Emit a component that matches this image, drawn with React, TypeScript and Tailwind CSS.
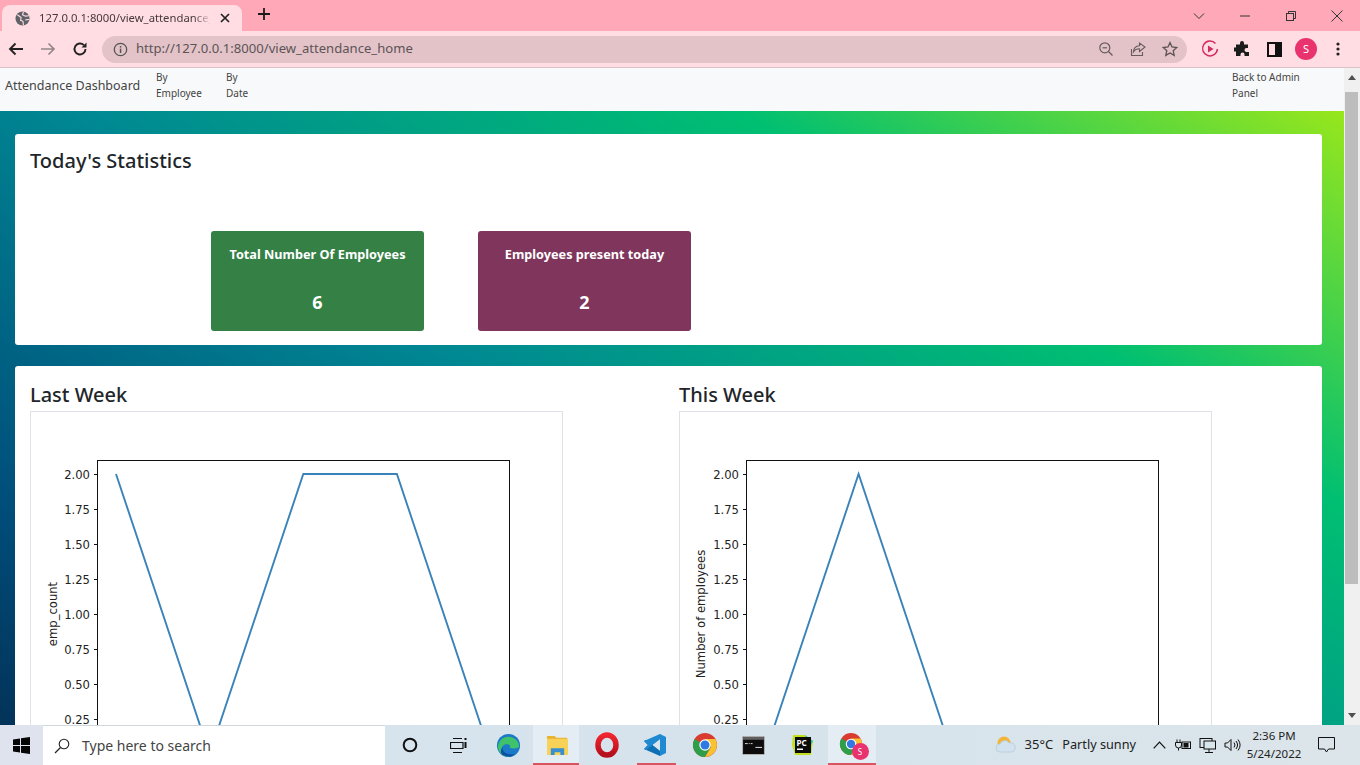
import React from "react";

const ui = { fontFamily: '"Noto Sans", "Open Sans", sans-serif' };

function Chart({ ylabel, points, labelX }: { ylabel: string; points: string; labelX: number }) {
  const ticks = [
    ["2.00", 62], ["1.75", 97], ["1.50", 132], ["1.25", 167], ["1.00", 202], ["0.75", 237], ["0.50", 272], ["0.25", 307], ["0.00", 342],
  ] as [string, number][];
  return (
    <svg width="531" height="398" viewBox="0 0 531 398" className="block" style={{ fontFamily: '"DejaVu Sans", sans-serif' }}>
      <rect x="66.5" y="48.5" width="412" height="308" fill="#fff" stroke="#111" strokeWidth="1" />
      {ticks.map(([t, y]) => (
        <g key={t}>
          <line x1="63" x2="66" y1={y + 0.5} y2={y + 0.5} stroke="#111" />
          <text x="59" y={y + 4.5} fontSize="11.6" fill="#222" textAnchor="end">{t}</text>
        </g>
      ))}
      <text transform={`translate(${labelX} 202) rotate(-90)`} fontSize="11.6" fill="#222" textAnchor="middle">{ylabel}</text>
      <polyline points={points} fill="none" stroke="#3a83b9" strokeWidth="1.9" />
    </svg>
  );
}

function WeekCol({ title, ylabel, points, labelX, width }: { title: string; ylabel: string; points: string; labelX: number; width: string }) {
  return (
    <div className={width}>
      <h3 className="text-[20px] leading-[28px] font-medium text-[#212529] pt-[15px] pb-[2px]" style={ui}>{title}</h3>
      <div className="border border-[#dee2e6] w-[533px] bg-white">
        <Chart ylabel={ylabel} points={points} labelX={labelX} />
      </div>
    </div>
  );
}

function Stat({ title, value, color }: { title: string; value: string; color: string }) {
  return (
    <div className={`w-[213px] h-[100px] rounded-[3px] text-white text-center flex flex-col ${color}`}>
      <div className="text-[12.7px] font-bold leading-[18px] pt-[14px]" style={ui}>{title}</div>
      <div className="text-[18px] font-bold leading-[24px] mt-[27px]" style={ui}>{value}</div>
    </div>
  );
}

function Toolbar() {
  return (
    <div className="h-[37px] bg-[#ffdde3] border-b border-[#dcc0c6] flex items-center pl-[8px] pr-[14px]">
      <svg width="16" height="16" viewBox="0 0 16 16" className="mr-[16px]"><path d="M15 8H2M7.5 2.5 2 8l5.5 5.5" fill="none" stroke="#222" strokeWidth="1.9" /></svg>
      <svg width="16" height="16" viewBox="0 0 16 16" className="mr-[16px]"><path d="M1 8h13M8.5 2.5 14 8l-5.5 5.5" fill="none" stroke="#94868a" strokeWidth="1.7" /></svg>
      <svg width="16" height="16" viewBox="0 0 16 16" className="mr-[14px]"><path d="M13.5 8a5.5 5.5 0 1 1-1.6-3.9" fill="none" stroke="#222" strokeWidth="1.9" /><path d="M14.5 1.5v5h-5z" fill="#222" /></svg>
      <div className="w-[1085px] h-[27px] rounded-full bg-[#e3c3c8] flex items-center pl-[11px] pr-[9px]">
        <svg width="15" height="15" viewBox="0 0 15 15" className="mr-[8px]"><circle cx="7.5" cy="7.5" r="6.2" fill="none" stroke="#555" strokeWidth="1.3" /><rect x="6.8" y="6.6" width="1.5" height="4.4" fill="#555" /><rect x="6.8" y="4" width="1.5" height="1.6" fill="#555" /></svg>
        <span className="text-[13.1px] text-[#5c5356]" style={ui}>http://127.0.0.1:8000/view_attendance_home</span>
        <div className="ml-auto flex items-center gap-[16px]">
          <svg width="16" height="16" viewBox="0 0 16 16"><circle cx="6.8" cy="6.8" r="5" fill="none" stroke="#665c5f" strokeWidth="1.2" /><path d="M10.5 10.5 14.5 14.5" stroke="#665c5f" strokeWidth="1.3" /><path d="M4.5 6.8h4.6" stroke="#665c5f" strokeWidth="1.2" /></svg>
          <svg width="16" height="16" viewBox="0 0 16 16"><path d="M1.5 8v6.5h11V11" fill="none" stroke="#665c5f" strokeWidth="1.1" /><path d="M9.5 2v2.7C5.5 5 3.5 7.5 3.4 11c1.4-2.3 3.4-3.2 6.1-3.2V10.5L15 6z" fill="none" stroke="#665c5f" strokeWidth="1.1" /></svg>
          <svg width="16" height="16" viewBox="0 0 16 16"><path d="M8 1.6 10 6l4.7.5-3.5 3.2 1 4.7L8 12l-4.2 2.4 1-4.7L1.3 6.5 6 6z" fill="none" stroke="#5b5255" strokeWidth="1.3" /></svg>
        </div>
      </div>
      <svg width="18" height="18" viewBox="0 0 18 18" className="ml-[14px]"><path d="M14.5 3.5A7.4 7.4 0 1 0 16.4 9" fill="none" stroke="#d22c61" strokeWidth="1.5" /><path d="M7 5.5 12.5 9 7 12.500z" fill="#d22c61" /></svg>
      <svg width="16" height="16" viewBox="0 0 16 16" className="ml-[15px]"><path d="M6 2a2 2 0 0 1 4 0V3.500h4V7h-1.500a2 2 0 0 0 0 4H15v4H10.500v-1.500a2 2 0 0 0-4 0V15H2v-4.500H.8a2 2 0 0 1 0-4H2V3.500h4z" fill="#1c1c1c" /></svg>
      <svg width="15" height="15" viewBox="0 0 15 15" className="ml-[17px]"><rect x="1" y="1" width="13" height="13" fill="none" stroke="#111" strokeWidth="2" /><rect x="8" y="1" width="6" height="13" fill="#111" /></svg>
      <div className="ml-[13px] w-[22px] h-[22px] rounded-full bg-[#e8336f] text-white text-[11px] flex items-center justify-center" style={ui}>S</div>
      <svg width="6" height="16" viewBox="0 0 6 16" className="ml-[18px]"><circle cx="3" cy="3" r="1.600" fill="#222" /><circle cx="3" cy="8" r="1.600" fill="#222" /><circle cx="3" cy="13" r="1.600" fill="#222" /></svg>
    </div>
  );
}

function TitleBar() {
  return (
    <div className="h-[31px] bg-[#ffa9b8] flex items-end relative">
      <div className="ml-[2px] w-[240px] h-[26px] bg-[#ffdde3] rounded-t-[8px] flex items-center pl-[13px] pr-[12px]">
        <svg width="15" height="15" viewBox="0 0 16 16" className="mr-[9px] shrink-0"><circle cx="8" cy="8" r="7.500" fill="#5f6368" /><path d="M2.500 4 6.500 7 6 10l2.500 1 .5 4M9 1 8 4l3 1.500 4-.5M11 9.500l4-.5" stroke="#ffdde3" strokeWidth="1.200" fill="none" /></svg>
        <span className="text-[11.300px] text-[#45393c] whitespace-nowrap overflow-hidden w-[172px]" style={{ ...ui, maskImage: "linear-gradient(to right, black 90%, transparent)" }}>127.0.0.1:8000/view_attendance_home</span>
        <svg width="10" height="10" viewBox="0 0 10 10" className="ml-auto"><path d="M1 1 9 9M9 1 1 9" stroke="#222" strokeWidth="1.700" /></svg>
      </div>
      <svg width="14" height="14" viewBox="0 0 14 14" className="ml-[15px] mb-[10px]"><path d="M7 1v12M1 7h12" stroke="#1b1b1b" strokeWidth="1.800" /></svg>
      <div className="ml-auto flex h-full items-center text-[#333]">
        <div className="w-[46px] flex justify-center"><svg width="12" height="8" viewBox="0 0 12 8"><path d="M1 1.500 6 6.500 11 1.500" fill="none" stroke="#333" /></svg></div>
        <div className="w-[46px] flex justify-center"><svg width="10" height="2" viewBox="0 0 10 2"><path d="M0 1h10" stroke="#333" /></svg></div>
        <div className="w-[46px] flex justify-center"><svg width="10" height="10" viewBox="0 0 10 10"><rect x=".5" y="2.500" width="7" height="7" fill="none" stroke="#333" /><path d="M2.500 2.500V.5h7v7H7.500" fill="none" stroke="#333" /></svg></div>
        <div className="w-[46px] flex justify-center"><svg width="12" height="12" viewBox="0 0 12 12"><path d="M.5.5l11 11M11.500.5l-11 11" stroke="#333" /></svg></div>
      </div>
    </div>
  );
}

function Chrome({ size = 26 }: { size?: number }) {
  return (
    <svg width={size} height={size} viewBox="0 0 26 26">
      <circle cx="13" cy="13" r="12" fill="#d93b30" />
      <path d="M13 13 2.600 7A12 12 0 0 0 13 25l6-10z" fill="#2f9e4b" />
      <path d="M13 7h10.300A12 12 0 0 1 13 25l6-10z" fill="#f9c22e" />
      <circle cx="13" cy="13" r="5.700" fill="#fff" />
      <circle cx="13" cy="13" r="4.500" fill="#3079e3" />
    </svg>
  );
}

function TaskIcon({ children, bar, lit }: { children: React.ReactNode; bar?: string; lit?: string }) {
  return (
    <div className="w-[49px] relative flex items-center justify-center">
      {lit && <div className={`absolute inset-y-0 ${lit} bg-[#e4edf3]`} />}
      {bar && <div className={`absolute bottom-0 h-[2px] bg-[#d9545f] ${bar}`} />}
      <div className="relative flex">{children}</div>
    </div>
  );
}

function Taskbar() {
  return (
    <div className="h-[40px] shrink-0 flex items-stretch bg-gradient-to-r from-[#d8e5ef] via-[#d6e3ec] to-[#dbe5ea] relative">
      <div className="w-[43px] bg-[#dfe3ee] flex items-center justify-center">
        <svg width="17" height="17" viewBox="0 0 17 17"><path d="M0 2.500 7 1.500V8H0zM8 1.300 17 0V8H8zM0 9h7v6.500L0 14.500zM8 9h9v8L8 15.700z" fill="#050505" /></svg>
      </div>
      <div className="w-[342px] bg-white border-t border-[#cfd8df] flex items-center pl-[11px]">
        <svg width="16" height="16" viewBox="0 0 16 16" className="mr-[12px]"><circle cx="10" cy="6" r="4.800" fill="none" stroke="#222" strokeWidth="1.100" /><path d="M6.500 9.500 1 15" stroke="#222" strokeWidth="1.300" /></svg>
        <span className="text-[14px] text-[#444]" style={ui}>Type here to search</span>
      </div>
      <div className="w-[49px] flex items-center justify-center">
        <svg width="16" height="16" viewBox="0 0 16 16"><circle cx="8" cy="8" r="6.300" fill="none" stroke="#111" strokeWidth="2" /></svg>
      </div>
      <div className="w-[49px] mr-[1px] flex items-center justify-center">
        <svg width="17" height="15" viewBox="0 0 17 15"><path d="M3 .5h9M.5 4.500h12.500v6H.5zM3 14.500h9" fill="none" stroke="#111" strokeWidth="1.200" /><rect x="14.500" y="0" width="2" height="2" fill="#111" /><rect x="14.500" y="4" width="2" height="6" fill="#111" /></svg>
      </div>
      <TaskIcon>
        <svg width="25" height="25" viewBox="0 0 26 26"><circle cx="13" cy="13" r="12" fill="#1b79c8" /><path d="M2 15C2 7 9 3 14 4c6 1 10 5 10 10-1 2-6 3-10 1 0 0 2-2-1-3-4-1-8 2-7 6 1 4 6 6 12 4-4 4-14 3-16-7z" fill="#3fc26b" /><path d="M7 15c-1 5 5 8 12 7-2 3-8 3-12 1-3-2-2-7 0-8z" fill="#0b4fa0" /></svg>
      </TaskIcon>
      <TaskIcon bar="left-[0px] w-[46px]" lit="left-[0px] w-[46px]">
        <svg width="23" height="21" viewBox="0 0 24 22"><path d="M1 1h8l2 2h11v4H1z" fill="#e8b32e" /><rect x="1" y="4" width="22" height="17" fill="#f7d256" /><path d="M5 21v-7h14v7h-4v-3H9v3z" fill="#3a8fd0" /></svg>
      </TaskIcon>
      <TaskIcon>
        <svg width="24" height="26" viewBox="0 0 24 26"><defs><linearGradient id="op" x1="0" x2="0" y1="0" y2="1"><stop offset="0" stopColor="#f0252f" /><stop offset="1" stopColor="#b30f1c" /></linearGradient></defs><ellipse cx="12" cy="13" rx="9" ry="10" fill="none" stroke="url(#op)" strokeWidth="5.500" /></svg>
      </TaskIcon>
      <TaskIcon bar="left-[6px] w-[39px]">
        <svg width="24" height="24" viewBox="0 0 24 24" className="mr-[2px]"><path d="M17 1 23 4v16l-6 3L7 13z" fill="#1f8ad2" /><path d="M17 6v12L9 12z" fill="#d8e5ef" /><path d="M1 8l2-1 14 11v5L1 16l4-4z" fill="#0f6fb5" /><path d="M1 16l2 1L17 6V1L1 8l4 4z" fill="#1f8ad2" /></svg>
      </TaskIcon>
      <TaskIcon><Chrome /></TaskIcon>
      <TaskIcon>
        <svg width="23" height="19" viewBox="0 0 24 20"><rect x=".5" y=".5" width="23" height="19" rx="1" fill="#0c0c0c" stroke="#b5b5b5" /><rect x="1" y="1" width="22" height="3" fill="#5f5f5f" /><path d="M3 8h3M7 8h1M9 8h2" stroke="#ddd" /><path d="M14 12h7" stroke="#eee" /></svg>
      </TaskIcon>
      <TaskIcon>
        <svg width="24" height="24" viewBox="0 0 24 24"><path d="M2 2h12l8 6-2 14H4L1 12z" fill="#c5e01c" /><path d="M14 2l8 6-4 8z" fill="#21c7a8" /><rect x="4" y="4" width="16" height="16" fill="#0b0b0b" /><text x="5.500" y="12.500" fontSize="8" fontWeight="700" fill="#fff" style={ui}>PC</text><rect x="6" y="15.500" width="6" height="1.500" fill="#fff" /></svg>
      </TaskIcon>
      <TaskIcon bar="left-[1px] w-[48px]" lit="left-[1px] w-[48px]">
        <div className="relative w-[26px] h-[26px]">
          <Chrome size={24} />
          <div className="absolute right-[-4px] bottom-[-2px] w-[17px] h-[17px] rounded-full bg-[#e8336f] text-white text-[8px] flex items-center justify-center" style={ui}>S</div>
        </div>
      </TaskIcon>
      <div className="ml-auto flex items-center text-[#222]">
        <svg width="22" height="18" viewBox="0 0 22 18" className="mr-[9px]"><circle cx="10" cy="7" r="6.500" fill="#f3b437" /><path d="M6 16a4 4 0 0 1 0-8 5 5 0 0 1 9-1 4.500 4.500 0 0 1 3 9z" fill="#d2e3ef" stroke="#bcd0de" /></svg>
        <span className="text-[13px] mr-[9px]" style={ui}>35°C</span>
        <span className="text-[12.700px] mr-[17px]" style={ui}>Partly sunny</span>
        <svg width="13" height="8" viewBox="0 0 13 8" className="mr-[9px]"><path d="M.7 7.300 6.500 1.200l5.800 6.100" fill="none" stroke="#111" strokeWidth="1.200" /></svg>
        <svg width="16" height="12" viewBox="0 0 16 12" className="mr-[8px]"><path d="M2 .5v3M5 .5v3M0.500 3.500h6V6a3 3 0 0 1-6 0zM3.500 9v2.500" fill="none" stroke="#111" /><rect x="7" y="3" width="8.500" height="6.500" fill="none" stroke="#111" /><rect x="8.500" y="4" width="5" height="4.500" fill="#111" /></svg>
        <svg width="17" height="15" viewBox="0 0 17 15" className="mr-[8px]"><rect x="1" y=".5" width="12" height="9" fill="none" stroke="#111" /><rect x="5" y="3" width="11.500" height="8" fill="#d8e5ea" stroke="#111" /><path d="M6 14.500h8M10 11v3" stroke="#111" /></svg>
        <svg width="17" height="14" viewBox="0 0 17 14" className="mr-[1px]"><path d="M1 5h2.500L7 1.500v11L3.500 9H1z" fill="none" stroke="#111" /><path d="M10 4.500a4 4 0 0 1 0 5M12 3a6.500 6.500 0 0 1 0 8M14 1.500a9 9 0 0 1 0 11" fill="none" stroke="#111" /></svg>
        <div className="w-[64px] text-center text-[11.500px] leading-[18px]" style={ui}><div>2:36 PM</div><div>5/24/2022</div></div>
        <svg width="17" height="16" viewBox="0 0 17 16" className="ml-[12px] mr-[25px]"><path d="M.5.5h16v11.500h-6L8.500 15l-2-3h-6z" fill="none" stroke="#111" /></svg>
      </div>
    </div>
  );
}

export default function App() {
  return (
    <div className="w-[1360px] h-[765px] overflow-hidden flex flex-col" style={ui}>
      <TitleBar />
      <Toolbar />
      <div className="flex-1 flex min-h-0">
        <div className="flex-1 min-w-0 overflow-hidden">
          <div className="h-[876px] w-[1344px] bg-[linear-gradient(to_right_top,#051937,#004d7a,#008793,#00bf72,#a8eb12)]">
            <nav className="h-[43px] bg-[#f8f9fa] flex items-start pt-[1px] pl-[5px] pr-[42px] text-[#444]">
              <span className="text-[12.500px] leading-[34px] whitespace-nowrap w-[151px]">Attendance Dashboard</span>
              <span className="text-[10px] leading-[16px] w-[70px]">By<br />Employee</span>
              <span className="text-[10px] leading-[16px]">By<br />Date</span>
              <span className="text-[10px] leading-[16px] ml-auto w-[70px]">Back to Admin Panel</span>
            </nav>
            <main className="px-[15px] pt-[23px] flex flex-col gap-[21px] items-stretch">
              <section className="h-[211px] bg-white rounded-[3px] w-[1307px] px-[15px] flex flex-col">
                <h3 className="text-[20px] leading-[28px] font-medium text-[#212529] pt-[13px] h-[97px]" style={ui}>Today's Statistics</h3>
                <div className="flex gap-[54px] pl-[181px]">
                  <Stat title="Total Number Of Employees" value="6" color="bg-[#348045]" />
                  <Stat title="Employees present today" value="2" color="bg-[#80355c]" />
                </div>
              </section>
              <section className="bg-white rounded-[3px] w-[1307px] h-[480px] px-[15px] flex">
                <WeekCol title="Last Week" ylabel="emp_count" labelX={26} points="85,62 178.6,342 272.3,62 365.9,62 459.5,342" width="w-[649px]" />
                <WeekCol title="This Week" ylabel="Number of employees" labelX={25} points="85,342 178.6,62 272.3,342 365.9,342 459.5,342" width="w-[600px]" />
              </section>
            </main>
          </div>
        </div>
        <div className="w-[16px] bg-[#f0f0f0] flex flex-col items-center">
          <svg width="8" height="5" viewBox="0 0 8 5" className="mt-[7px]"><path d="M4 0 8 5H0z" fill="#505050" /></svg>
          <div className="w-[13px] h-[492px] bg-[#bdbdbd] mt-[12px] mr-[1px]" />
          <svg width="8" height="5" viewBox="0 0 8 5" className="mt-auto mb-[7px]"><path d="M4 5 8 0H0z" fill="#505050" /></svg>
        </div>
      </div>
      <Taskbar />
    </div>
  );
}
